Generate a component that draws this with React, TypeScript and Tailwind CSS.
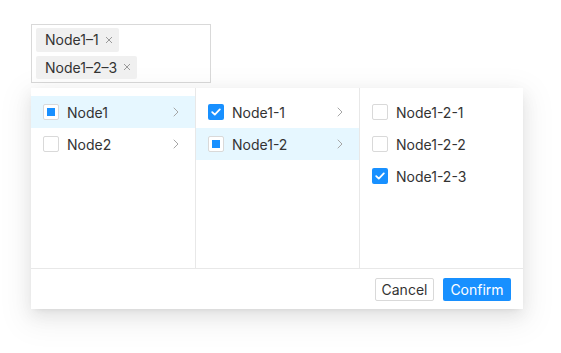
import React from "react"

type CheckState = "checked" | "half" | "none"

interface Option {
  label: string
  state: CheckState
  active?: boolean
  hasChildren?: boolean
}

const columns: Option[][] = [
  [
    { label: "Node1", state: "half", active: true, hasChildren: true },
    { label: "Node2", state: "none", hasChildren: true },
  ],
  [
    { label: "Node1-1", state: "checked", hasChildren: true },
    { label: "Node1-2", state: "half", active: true, hasChildren: true },
  ],
  [
    { label: "Node1-2-1", state: "none" },
    { label: "Node1-2-2", state: "none" },
    { label: "Node1-2-3", state: "checked" },
  ],
]

const colWidths = ["w-[165px] border-r border-[#e8e8e8]", "w-[164px] border-r border-[#e8e8e8]", "flex-1"]

function Checkbox({ state }: { state: CheckState }) {
  if (state === "checked") {
    return (
      <span className="flex h-4 w-4 shrink-0 items-center justify-center rounded-[2px] bg-[#1890ff]">
        <svg width="10" height="8" viewBox="0 0 10 8" fill="none">
          <path d="M1.2 4.1 3.8 6.6 8.8 1.4" stroke="white" strokeWidth="1.8" strokeLinecap="round" strokeLinejoin="round" />
        </svg>
      </span>
    )
  }
  return (
    <span className="flex h-4 w-4 shrink-0 items-center justify-center rounded-[2px] border border-[#d9d9d9] bg-white">
      {state === "half" && <span className="h-2 w-2 bg-[#1890ff]" />}
    </span>
  )
}

function Chevron() {
  return (
    <svg width="6" height="10" viewBox="0 0 6 10" fill="none" className="ml-auto">
      <path d="M1 1l4 4-4 4" stroke="#a6a6a6" strokeWidth="1" strokeLinecap="round" strokeLinejoin="round" />
    </svg>
  )
}

function Tag({ text }: { text: string }) {
  return (
    <span className="flex h-6 w-fit items-center rounded-[2px] bg-[#f0f0f0] pl-[9px] pr-[6px] text-[14px] text-[#333]">
      {text}
      <svg width="8" height="8" viewBox="0 0 8 8" className="ml-[6px]">
        <path d="M1 1l6 6M7 1 1 7" stroke="#999" strokeWidth="1" />
      </svg>
    </span>
  )
}

export default function App() {
  return (
    <div
      className="min-h-screen bg-white pl-[31px] pt-[24px] text-[#333]"
      style={{ fontFamily: "Inter, 'Noto Sans', sans-serif" }}
    >
      <div className="flex h-[59px] w-[180px] flex-col gap-1 border border-[#d9d9d9] bg-white px-1 py-[3px]">
        <Tag text="Node1–1" />
        <Tag text="Node1–2–3" />
      </div>

      <div className="mt-[5px] w-[492px] bg-white shadow-[0_3px_6px_-4px_rgba(0,0,0,0.12),0_6px_16px_0_rgba(0,0,0,0.08),0_9px_28px_8px_rgba(0,0,0,0.05)]">
        <div className="flex h-[180px]">
          {columns.map((col, i) => (
            <div key={i} className={`flex flex-col pt-2 ${colWidths[i]}`}>
              {col.map((opt) => (
                <div
                  key={opt.label}
                  className={`flex h-8 items-center gap-2 pl-3 pr-4 text-[14px] ${opt.active ? "bg-[#e6f7ff]" : ""}`}
                >
                  <Checkbox state={opt.state} />
                  <span>{opt.label}</span>
                  {opt.hasChildren && <Chevron />}
                </div>
              ))}
            </div>
          ))}
        </div>
        <div className="flex h-[41px] items-center justify-end gap-[9px] border-t border-[#e8e8e8] pr-3">
          <button className="h-[23px] w-[59px] rounded-[2px] border border-[#d9d9d9] bg-white text-[14px] text-[#333]">
            Cancel
          </button>
          <button className="h-[23px] w-[68px] rounded-[2px] bg-[#1890ff] text-[14px] text-white">
            Confirm
          </button>
        </div>
      </div>
    </div>
  )
}
